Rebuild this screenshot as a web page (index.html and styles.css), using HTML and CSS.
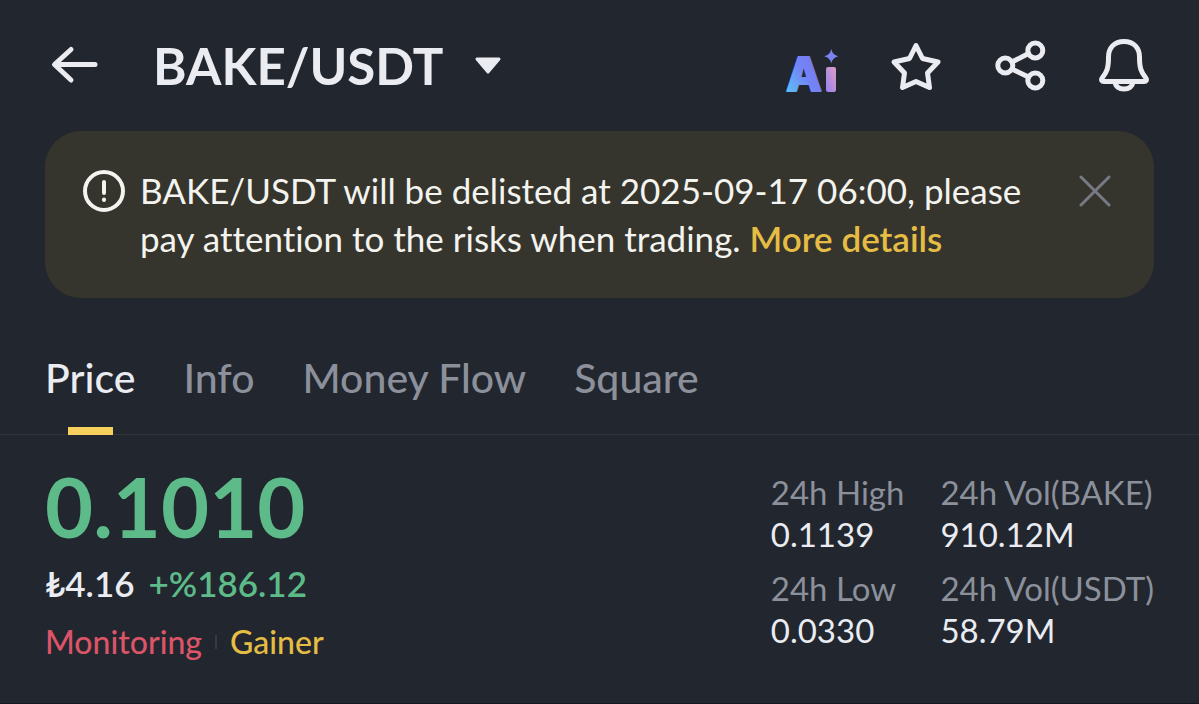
FILE: index.html
```html
<!DOCTYPE html>
<html lang="en">
<head>
    <meta charset="UTF-8">
    <meta name="viewport" content="width=device-width, initial-scale=1.0">
    <title>BAKE/USDT</title>
    <link rel="stylesheet" href="styles.css">
</head>
<body>
    <header class="header">
        <button type="button" class="icon-btn back-btn" aria-label="Back">
            <svg viewBox="0 0 60 60" class="icon">
                <path d="M50 28.500H10M26 13.500L9.500 28.500L26 44"/>
            </svg>
        </button>
        <button type="button" class="pair-btn">
            <h1 class="pair-name">BAKE/USDT</h1>
            <svg viewBox="0 0 28 18" class="caret">
                <path d="M3 2H25L14 15Z"/>
            </svg>
        </button>
        <div class="header-actions">
            <button type="button" class="icon-btn" aria-label="Ai">
                <svg viewBox="0 0 60 60" class="ai-icon">
                    <defs>
                        <linearGradient id="aiLetter" x1="0" y1="1" x2="1" y2="0">
                            <stop offset="0.1" stop-color="#5cc0f5"/>
                            <stop offset="0.5" stop-color="#7384f5"/>
                            <stop offset="1" stop-color="#7a72ee"/>
                        </linearGradient>
                        <linearGradient id="aiStem" x1="1" y1="0" x2="0" y2="1">
                            <stop offset="0" stop-color="#dc9fc4"/>
                            <stop offset="1" stop-color="#9a80ee"/>
                        </linearGradient>
                    </defs>
                    <text x="22" y="55" text-anchor="middle" class="ai-letter" fill="url(#aiLetter)" stroke="url(#aiLetter)">A</text>
                    <rect x="44" y="31" width="10" height="25" rx="2" fill="url(#aiStem)"/>
                    <path d="M49.300 13Q50.500 19 56.300 20.300Q50.500 21.500 49.300 27.500Q48 21.500 42.300 20.300Q48 19 49.300 13Z" fill="#7b83ee"/>
                </svg>
            </button>
            <button type="button" class="icon-btn" aria-label="Add to favorites">
                <svg viewBox="0 0 60 60" class="icon">
                    <path d="M30 9.500L36.500 22.500L52 26L41.500 37L43.500 51.500L30 45.500L16.500 51.500L18.500 37L8 26L23.500 22.500Z"/>
                </svg>
            </button>
            <button type="button" class="icon-btn" aria-label="Share">
                <svg viewBox="0 0 60 60" class="icon">
                    <circle cx="15.300" cy="29.500" r="7.500"/>
                    <circle cx="45.300" cy="14.500" r="7.500"/>
                    <circle cx="45.300" cy="44.500" r="7.500"/>
                    <path d="M22 26L38.500 17.500M22 33L38.500 41"/>
                </svg>
            </button>
            <button type="button" class="icon-btn" aria-label="Price alerts">
                <svg viewBox="0 0 60 60" class="icon">
                    <path d="M30 5.500C20 5.500 14.500 12 14.500 21C14.500 32 13 36 8.500 41.500C6.500 44 8 45.500 10 45.500H50C52 45.500 53.500 44 51.500 41.500C47 36 45.500 32 45.500 21C45.500 12 40 5.500 30 5.500Z"/>
                    <path d="M21 46C21.500 50.500 25 53 30 53S38.500 50.500 39 46"/>
                </svg>
            </button>
        </div>
    </header>

    <main>
        <div class="notice" role="alert">
            <svg viewBox="0 0 42 42" class="notice-icon">
                <circle cx="21" cy="21" r="19"/>
                <path d="M21 12V23M21 29.500V30"/>
            </svg>
            <p class="notice-text">BAKE/USDT will be delisted at 2025-09-17 06:00, please pay attention to the risks when trading. <a href="#details">More details</a></p>
            <button type="button" class="close-btn" aria-label="Close">
                <svg viewBox="0 0 32 32"><path d="M2 2L30 30M30 2L2 30"/></svg>
            </button>
        </div>

        <nav class="tabs">
            <a href="#price" class="tab active">Price</a>
            <a href="#info" class="tab">Info</a>
            <a href="#money-flow" class="tab">Money Flow</a>
            <a href="#square" class="tab">Square</a>
        </nav>

        <section class="ticker">
            <div class="price-block">
                <div class="last-price">0.1010</div>
                <div class="change-row">
                    <span>₺4.16</span>
                    <span class="change">+%186.12</span>
                </div>
                <div class="tags">
                    <a href="#monitoring" class="tag-monitoring">Monitoring</a>
                    <span class="divider"></span>
                    <a href="#gainer" class="tag-gainer">Gainer</a>
                </div>
            </div>
            <dl class="stats">
                <div>
                    <dt>24h High</dt>
                    <dd>0.1139</dd>
                </div>
                <div>
                    <dt>24h Vol(BAKE)</dt>
                    <dd>910.12M</dd>
                </div>
                <div>
                    <dt>24h Low</dt>
                    <dd>0.0330</dd>
                </div>
                <div>
                    <dt>24h Vol(USDT)</dt>
                    <dd>58.79M</dd>
                </div>
            </dl>
        </section>
    </main>
</body>
</html>
```
FILE: styles.css
```css
* {
    margin: 0;
    padding: 0;
    box-sizing: border-box;
}

body {
    font-family: Lato, "Liberation Sans", sans-serif;
    font-variant-ligatures: none;
    background: #22262e;
    color: #eaecf2;
    min-height: 100vh;
    border-bottom: 1px solid #16181e;
}

button {
    background: none;
    border: none;
    color: inherit;
    font-family: inherit;
    cursor: pointer;
}

a {
    color: inherit;
    text-decoration: none;
}

svg {
    display: block;
    width: 100%;
    height: 100%;
}

/* Header */
.header {
    display: flex;
    align-items: center;
    padding: 36px 45px 35px;
}

.icon-btn {
    width: 60px;
    height: 60px;
    flex-shrink: 0;
}

.icon {
    fill: none;
    stroke: #eaecf2;
    stroke-width: 5;
    stroke-linecap: round;
    stroke-linejoin: round;
}

.pair-btn {
    display: flex;
    align-items: center;
    gap: 31px;
    margin-left: 48px;
}

.pair-name {
    font-size: 51px;
    line-height: 60px;
    font-weight: 700;
}

.caret {
    width: 28px;
    height: 18px;
    fill: #eaecf2;
    stroke: #eaecf2;
    stroke-width: 3;
    stroke-linejoin: round;
}

.header-actions {
    display: flex;
    gap: 44px;
    margin-left: auto;
}

.ai-icon {
    overflow: visible;
}

.ai-letter {
    font-family: Inter, sans-serif;
    font-size: 46px;
    font-weight: 800;
    stroke-width: 2;
    stroke-linejoin: round;
}

/* Delisting notice */
.notice {
    display: flex;
    align-items: flex-start;
    margin: 0 45px;
    padding: 35px 43px 36px 38px;
    background: #36352d;
    border-radius: 36px;
}

.notice-icon {
    width: 42px;
    height: 42px;
    margin-top: 4px;
    flex-shrink: 0;
    fill: none;
    stroke: #f3f3ef;
    stroke-width: 4;
    stroke-linecap: round;
}

.notice-text {
    flex: 1;
    margin: 0 24px 0 15px;
    font-size: 35px;
    line-height: 48px;
    color: #f3f3ef;
}

.notice-text a {
    color: #e5bd45;
    font-weight: 600;
}

.close-btn {
    width: 32px;
    height: 32px;
    margin-top: 9px;
    flex-shrink: 0;
    stroke: #777984;
    stroke-width: 3;
    stroke-linecap: round;
}

/* Tabs */
.tabs {
    display: flex;
    gap: 48px;
    margin-top: 44px;
    padding: 0 45px;
    border-bottom: 1px solid #2f333b;
}

.tab {
    position: relative;
    padding: 12px 0 32px;
    font-size: 41px;
    line-height: 48px;
    font-weight: 500;
    color: #8b909b;
}

.tab.active {
    color: #eaecf2;
}

.tab.active::after {
    content: "";
    position: absolute;
    left: 50%;
    bottom: -1px;
    width: 45px;
    height: 8px;
    margin-left: -22px;
    background: #f5d05c;
}

/* Ticker */
.ticker {
    display: flex;
    justify-content: space-between;
    align-items: flex-start;
    padding: 36px 45px;
}

.last-price {
    font-size: 83px;
    line-height: 70px;
    font-weight: 700;
    color: #5dbb89;
}

.change-row {
    display: flex;
    gap: 14px;
    margin-top: 18px;
    font-size: 35px;
    line-height: 48px;
    font-weight: 600;
}

.change {
    color: #5dbb89;
}

.tags {
    display: flex;
    align-items: center;
    gap: 13px;
    margin-top: 11px;
    font-size: 32px;
    line-height: 48px;
    font-weight: 500;
}

.divider {
    width: 2px;
    height: 14px;
    background: #363a44;
}

.tag-monitoring {
    color: #dc5468;
}

.tag-gainer {
    color: #e5bd45;
}

.stats {
    display: grid;
    grid-template-columns: auto auto;
    gap: 12px 36px;
    font-size: 33px;
    line-height: 42px;
}

.stats dt {
    color: #8b909b;
}
```
